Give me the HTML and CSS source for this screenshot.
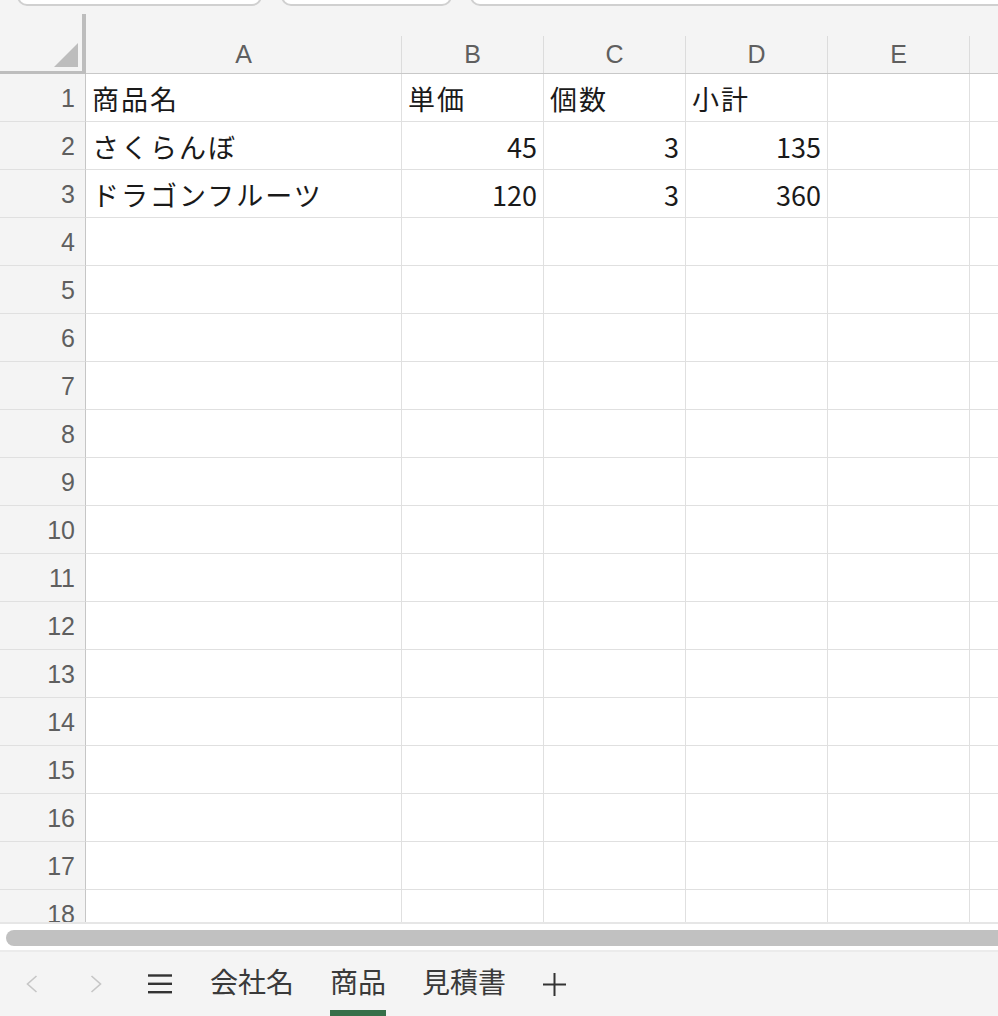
FILE: index.html
```html
<!DOCTYPE html>
<html lang="ja">
<head>
    <meta charset="UTF-8">
    <meta name="viewport" content="width=device-width, initial-scale=1.0">
    <title>商品</title>
    <link rel="stylesheet" href="styles.css">
</head>
<body>
    <!-- toolbar (only the bottom edge is visible) -->
    <div class="toolbar">
        <div class="tool tool-font"></div>
        <div class="tool tool-size"></div>
        <div class="tool tool-wide"></div>
    </div>

    <div class="sheet">
        <div class="row head-row">
            <div class="corner">
                <div class="corner-box">
                    <svg width="24" height="24" viewBox="0 0 24 24"><polygon points="24,0 24,24 0,24" fill="#bdbdbd"/></svg>
                </div>
            </div>
            <div class="col"><div class="col-label">A</div></div>
            <div class="col"><div class="col-label">B</div></div>
            <div class="col"><div class="col-label">C</div></div>
            <div class="col"><div class="col-label">D</div></div>
            <div class="col"><div class="col-label">E</div></div>
            <div class="col"><div class="col-label"></div></div>
        </div>

        <div class="row"><div class="row-num">1</div><div class="cell text">商品名</div><div class="cell text">単価</div><div class="cell text">個数</div><div class="cell text">小計</div><div class="cell"></div><div class="cell"></div></div>
        <div class="row"><div class="row-num">2</div><div class="cell text">さくらんぼ</div><div class="cell num">45</div><div class="cell num">3</div><div class="cell num">135</div><div class="cell"></div><div class="cell"></div></div>
        <div class="row"><div class="row-num">3</div><div class="cell text">ドラゴンフルーツ</div><div class="cell num">120</div><div class="cell num">3</div><div class="cell num">360</div><div class="cell"></div><div class="cell"></div></div>
        <div class="row"><div class="row-num">4</div><div class="cell"></div><div class="cell"></div><div class="cell"></div><div class="cell"></div><div class="cell"></div><div class="cell"></div></div>
        <div class="row"><div class="row-num">5</div><div class="cell"></div><div class="cell"></div><div class="cell"></div><div class="cell"></div><div class="cell"></div><div class="cell"></div></div>
        <div class="row"><div class="row-num">6</div><div class="cell"></div><div class="cell"></div><div class="cell"></div><div class="cell"></div><div class="cell"></div><div class="cell"></div></div>
        <div class="row"><div class="row-num">7</div><div class="cell"></div><div class="cell"></div><div class="cell"></div><div class="cell"></div><div class="cell"></div><div class="cell"></div></div>
        <div class="row"><div class="row-num">8</div><div class="cell"></div><div class="cell"></div><div class="cell"></div><div class="cell"></div><div class="cell"></div><div class="cell"></div></div>
        <div class="row"><div class="row-num">9</div><div class="cell"></div><div class="cell"></div><div class="cell"></div><div class="cell"></div><div class="cell"></div><div class="cell"></div></div>
        <div class="row"><div class="row-num">10</div><div class="cell"></div><div class="cell"></div><div class="cell"></div><div class="cell"></div><div class="cell"></div><div class="cell"></div></div>
        <div class="row"><div class="row-num">11</div><div class="cell"></div><div class="cell"></div><div class="cell"></div><div class="cell"></div><div class="cell"></div><div class="cell"></div></div>
        <div class="row"><div class="row-num">12</div><div class="cell"></div><div class="cell"></div><div class="cell"></div><div class="cell"></div><div class="cell"></div><div class="cell"></div></div>
        <div class="row"><div class="row-num">13</div><div class="cell"></div><div class="cell"></div><div class="cell"></div><div class="cell"></div><div class="cell"></div><div class="cell"></div></div>
        <div class="row"><div class="row-num">14</div><div class="cell"></div><div class="cell"></div><div class="cell"></div><div class="cell"></div><div class="cell"></div><div class="cell"></div></div>
        <div class="row"><div class="row-num">15</div><div class="cell"></div><div class="cell"></div><div class="cell"></div><div class="cell"></div><div class="cell"></div><div class="cell"></div></div>
        <div class="row"><div class="row-num">16</div><div class="cell"></div><div class="cell"></div><div class="cell"></div><div class="cell"></div><div class="cell"></div><div class="cell"></div></div>
        <div class="row"><div class="row-num">17</div><div class="cell"></div><div class="cell"></div><div class="cell"></div><div class="cell"></div><div class="cell"></div><div class="cell"></div></div>
        <div class="row"><div class="row-num">18</div><div class="cell"></div><div class="cell"></div><div class="cell"></div><div class="cell"></div><div class="cell"></div><div class="cell"></div></div>
    </div>

    <div class="sheet-end"></div>
    <div class="scroll"><div class="scroll-thumb"></div></div>

    <!-- sheet tabs -->
    <div class="tabbar">
        <div class="nav">
            <svg width="12" height="18" viewBox="0 0 12 18"><polyline points="10.5,1 1.5,9 10.5,17" fill="none" stroke="#c6c6c6" stroke-width="1.6"/></svg>
        </div>
        <div class="nav">
            <svg width="12" height="18" viewBox="0 0 12 18"><polyline points="1.5,1 10.5,9 1.5,17" fill="none" stroke="#c6c6c6" stroke-width="1.6"/></svg>
        </div>
        <div class="nav">
            <svg width="24" height="22" viewBox="0 0 24 22">
                <rect x="0" y="1.3" width="24" height="2.4" fill="#333"/>
                <rect x="0" y="9.6" width="24" height="2.4" fill="#333"/>
                <rect x="0" y="18" width="24" height="2.4" fill="#333"/>
            </svg>
        </div>
        <div class="tab"><span class="tab-name">会社名</span><span class="tab-bar"></span></div>
        <div class="tab active"><span class="tab-name">商品</span><span class="tab-bar"></span></div>
        <div class="tab"><span class="tab-name">見積書</span><span class="tab-bar"></span></div>
        <div class="add">
            <svg width="23" height="23" viewBox="0 0 23 23">
                <line x1="0" y1="11.5" x2="23" y2="11.5" stroke="#333" stroke-width="2"/>
                <line x1="11.5" y1="0" x2="11.5" y2="23" stroke="#333" stroke-width="2"/>
            </svg>
        </div>
    </div>
</body>
</html>
```

FILE: styles.css
```css
body {
    margin: 0;
    width: 998px;
    height: 1016px;
    overflow: hidden;
    display: flex;
    flex-direction: column;
    background-color: #f4f4f4;
    font-family: 'Noto Sans CJK JP', 'Noto Sans', sans-serif;
    color: #111;
}

/* Toolbar */
.toolbar {
    flex: none;
    height: 6px;
    display: flex;
    align-items: flex-end;
    gap: 18px;
    padding-left: 17px;
    overflow: hidden;
}

.tool {
    flex: none;
    height: 30px;
    box-sizing: border-box;
    border: 2px solid #d0d0d0;
    border-radius: 10px;
    background-color: #fff;
}

.tool-font {
    width: 245px;
    margin-right: 1px;
}

.tool-size {
    width: 171px;
}

.tool-wide {
    width: 600px;
}

/* Grid */
.sheet {
    flex: none;
    height: 916px;
    overflow: hidden;
}

.row {
    display: grid;
    grid-template-columns: 86px 316px 142px 142px 142px 142px 1fr;
    height: 48px;
}

.head-row {
    height: 68px;
}

.corner {
    padding-top: 8px;
    box-sizing: border-box;
}

.corner-box {
    height: 100%;
    box-sizing: border-box;
    border-right: 4px solid #bdbdbd;
    border-bottom: 3px solid #bdbdbd;
    display: flex;
    justify-content: flex-end;
    align-items: flex-end;
    padding: 0 4px 4px 0;
}

.corner-box svg {
    display: block;
}

.col {
    padding-top: 30px;
    box-sizing: border-box;
    border-bottom: 1px solid #c8c8c8;
}

.col-label {
    height: 100%;
    box-sizing: border-box;
    border-right: 1px solid #dcdcdc;
    display: flex;
    justify-content: center;
    align-items: center;
    font-family: 'Liberation Sans', Arial, sans-serif;
    font-size: 25px;
    color: #5f5f5f;
}

.col:last-child .col-label {
    border-right: none;
}

.row-num {
    box-sizing: border-box;
    background-color: #f4f4f4;
    border-right: 1px solid #c6c6c6;
    border-bottom: 1px solid #e0e0e0;
    display: flex;
    justify-content: flex-end;
    align-items: center;
    padding: 2px 10px 0 0;
    font-family: 'Liberation Sans', Arial, sans-serif;
    font-size: 25px;
    color: #5f5f5f;
}

.cell {
    box-sizing: border-box;
    background-color: #fff;
    border-right: 1px solid #e0e0e0;
    border-bottom: 1px solid #e0e0e0;
    display: flex;
    align-items: center;
    padding: 2px 6px 0 6px;
    font-size: 27px;
    color: #1a1a1a;
    white-space: nowrap;
    overflow: hidden;
}

.cell:last-child {
    border-right: none;
}

.text {
    letter-spacing: 2px;
}

.num {
    justify-content: flex-end;
}

/* Scrollbar */
.sheet-end {
    flex: none;
    height: 2px;
    background-color: #e6e6e6;
}

.scroll {
    flex: none;
    height: 26px;
    box-sizing: border-box;
    padding: 6px 0 4px 6px;
    background-color: #fff;
}

.scroll-thumb {
    height: 16px;
    background-color: #c1c1c1;
    border-radius: 8px 0 0 8px;
}

/* Sheet tabs */
.tabbar {
    flex: none;
    height: 64px;
    border-top: 2px solid #ebebeb;
    display: flex;
    align-items: stretch;
}

.nav {
    width: 64px;
    display: flex;
    justify-content: center;
    align-items: center;
}

.nav svg,
.add svg {
    display: block;
}

.tab {
    display: flex;
    flex-direction: column;
    padding: 0 18px;
}

.tab-name {
    flex: 1;
    display: flex;
    align-items: center;
    font-size: 28px;
    color: #3a3a3a;
}

.tab-bar {
    height: 6px;
}

.tab.active .tab-bar {
    background-color: #36704a;
}

.add {
    display: flex;
    align-items: center;
    padding-left: 19px;
}
```
